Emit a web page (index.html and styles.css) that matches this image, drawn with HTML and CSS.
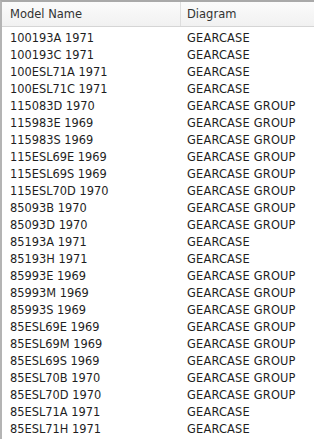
FILE: index.html
```html
<!DOCTYPE html>
<html>
<head>
<meta charset="utf-8">
<link rel="stylesheet" href="styles.css">
</head>
<body>
<div class="grid">
  <div class="head">
    <div class="hc c1">Model Name</div>
    <div class="hc c2">Diagram</div>
  </div>
  <div class="rows">
    <div class="row"><span class="c1">100193A 1971</span><span class="c2">GEARCASE</span></div>
    <div class="row"><span class="c1">100193C 1971</span><span class="c2">GEARCASE</span></div>
    <div class="row"><span class="c1">100ESL71A 1971</span><span class="c2">GEARCASE</span></div>
    <div class="row"><span class="c1">100ESL71C 1971</span><span class="c2">GEARCASE</span></div>
    <div class="row"><span class="c1">115083D 1970</span><span class="c2">GEARCASE GROUP</span></div>
    <div class="row"><span class="c1">115983E 1969</span><span class="c2">GEARCASE GROUP</span></div>
    <div class="row"><span class="c1">115983S 1969</span><span class="c2">GEARCASE GROUP</span></div>
    <div class="row"><span class="c1">115ESL69E 1969</span><span class="c2">GEARCASE GROUP</span></div>
    <div class="row"><span class="c1">115ESL69S 1969</span><span class="c2">GEARCASE GROUP</span></div>
    <div class="row"><span class="c1">115ESL70D 1970</span><span class="c2">GEARCASE GROUP</span></div>
    <div class="row"><span class="c1">85093B 1970</span><span class="c2">GEARCASE GROUP</span></div>
    <div class="row"><span class="c1">85093D 1970</span><span class="c2">GEARCASE GROUP</span></div>
    <div class="row"><span class="c1">85193A 1971</span><span class="c2">GEARCASE</span></div>
    <div class="row"><span class="c1">85193H 1971</span><span class="c2">GEARCASE</span></div>
    <div class="row"><span class="c1">85993E 1969</span><span class="c2">GEARCASE GROUP</span></div>
    <div class="row"><span class="c1">85993M 1969</span><span class="c2">GEARCASE GROUP</span></div>
    <div class="row"><span class="c1">85993S 1969</span><span class="c2">GEARCASE GROUP</span></div>
    <div class="row"><span class="c1">85ESL69E 1969</span><span class="c2">GEARCASE GROUP</span></div>
    <div class="row"><span class="c1">85ESL69M 1969</span><span class="c2">GEARCASE GROUP</span></div>
    <div class="row"><span class="c1">85ESL69S 1969</span><span class="c2">GEARCASE GROUP</span></div>
    <div class="row"><span class="c1">85ESL70B 1970</span><span class="c2">GEARCASE GROUP</span></div>
    <div class="row"><span class="c1">85ESL70D 1970</span><span class="c2">GEARCASE GROUP</span></div>
    <div class="row"><span class="c1">85ESL71A 1971</span><span class="c2">GEARCASE</span></div>
    <div class="row"><span class="c1">85ESL71H 1971</span><span class="c2">GEARCASE</span></div>
  </div>
</div>
</body>
</html>
```

FILE: styles.css
```css
html, body {
  margin: 0;
  padding: 0;
  background: #ffffff;
}
body {
  width: 314px;
  height: 441px;
  overflow: hidden;
  font-family: "DejaVu Sans", Verdana, sans-serif;
  font-size: 11.4px;
  color: #1e1e1e;
}
.grid {
  border-top: 2px solid #a9a9a9;
  border-left: 2px solid #b4b4b4;
  height: 439px;
  box-sizing: border-box;
}
.head {
  display: flex;
  height: 24px;
  background: linear-gradient(#fbfbfb, #f1f1f1);
  border-bottom: 1px solid #d5d5d5;
  color: #333333;
  font-size: 11.5px;
}
.hc {
  display: flex;
  align-items: center;
  padding-left: 8px;
}
.head .c1 {
  width: 170px;
  border-right: 1px solid #dedede;
}
.head .c2 {
  padding-left: 6px;
}
.rows {
  padding-top: 2px;
}
.row {
  display: flex;
  height: 17px;
  align-items: center;
}
.row .c1 {
  width: 177px;
  padding-left: 8px;
}
.row .c2 {
  padding-left: 0;
  letter-spacing: 0.2px;
}
```
